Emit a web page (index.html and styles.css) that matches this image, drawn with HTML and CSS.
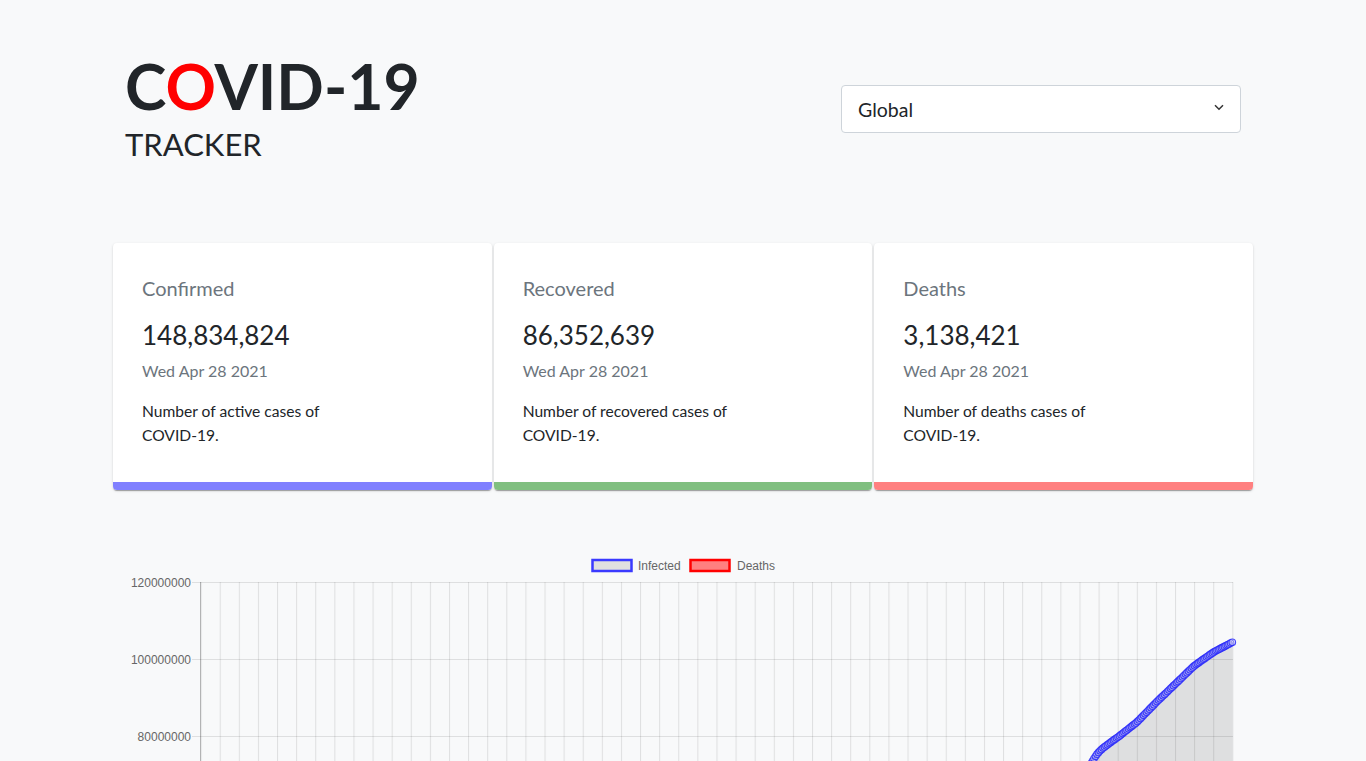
FILE: index.html
```html
<!DOCTYPE html>
<html lang="en">
<head>
<meta charset="utf-8">
<title>COVID-19 Tracker</title>
<link rel="stylesheet" href="styles.css">
</head>
<body>
<div class="container">
  <header class="header">
    <div class="brand">
      <h1 class="title">C<span class="red">O</span>VID-19</h1>
      <h2 class="subtitle">TRACKER</h2>
    </div>
    <div class="select">
      <span class="select-text">Global</span>
      <svg class="chevron" width="10" height="7" viewBox="0 0 10 7"><path d="M1 1.2l4 4 4-4" fill="none" stroke="#333" stroke-width="1.5"/></svg>
    </div>
  </header>

  <section class="cards">
    <div class="card">
      <div class="card-body">
        <p class="card-label">Confirmed</p>
        <p class="card-value">148,834,824</p>
        <p class="card-date">Wed Apr 28 2021</p>
        <p class="card-desc">Number of active cases of COVID-19.</p>
      </div>
      <div class="card-bar bar-blue"></div>
    </div>
    <div class="card">
      <div class="card-body">
        <p class="card-label">Recovered</p>
        <p class="card-value">86,352,639</p>
        <p class="card-date">Wed Apr 28 2021</p>
        <p class="card-desc">Number of recovered cases of COVID-19.</p>
      </div>
      <div class="card-bar bar-green"></div>
    </div>
    <div class="card">
      <div class="card-body">
        <p class="card-label">Deaths</p>
        <p class="card-value">3,138,421</p>
        <p class="card-date">Wed Apr 28 2021</p>
        <p class="card-desc">Number of deaths cases of COVID-19.</p>
      </div>
      <div class="card-bar bar-red"></div>
    </div>
  </section>

  <section class="chart">
    <svg class="chart-svg" width="1116" height="540" viewBox="0 0 1116 540">
      <defs>
        <pattern id="vgrid" patternUnits="userSpaceOnUse" x="75.6" y="0" width="19.106" height="540">
          <rect x="0" y="0" width="1" height="540" fill="rgba(0,0,0,0.1)"/>
        </pattern>
        <marker id="pt" markerUnits="userSpaceOnUse" markerWidth="10" markerHeight="10" refX="5" refY="5">
          <circle cx="5" cy="5" r="3.3" fill="rgba(220,220,240,0.35)" stroke="rgba(40,40,250,0.85)" stroke-width="1.1"/>
        </marker>
      </defs>

      <!-- legend -->
      <rect x="467.5" y="11" width="39" height="11" fill="#e0e0e0" stroke="#3a3aff" stroke-width="2.5"/>
      <text class="legend-text" x="513" y="20.5">Infected</text>
      <rect x="565.5" y="11" width="39" height="11" fill="#ff8080" stroke="#ff0000" stroke-width="2.5"/>
      <text class="legend-text" x="612" y="20.5">Deaths</text>

      <!-- vertical grid -->
      <rect x="75" y="33" width="1034" height="462" fill="url(#vgrid)"/>

      <!-- horizontal grid -->
      <g stroke="rgba(0,0,0,0.1)" stroke-width="1">
        <line x1="67" y1="33.5" x2="1108" y2="33.5"/>
        <line x1="67" y1="110.5" x2="1108" y2="110.5"/>
        <line x1="67" y1="187.5" x2="1108" y2="187.5"/>
        <line x1="67" y1="264.5" x2="1108" y2="264.5"/>
        <line x1="67" y1="341.5" x2="1108" y2="341.5"/>
        <line x1="67" y1="418.5" x2="1108" y2="418.5"/>
      </g>
      <line x1="75.5" y1="33" x2="75.5" y2="505" stroke="rgba(0,0,0,0.25)" stroke-width="1"/>
      <line x1="67" y1="495.5" x2="1108" y2="495.5" stroke="rgba(0,0,0,0.25)" stroke-width="1"/>

      <!-- y labels -->
      <g class="tick-text" text-anchor="end">
        <text x="66" y="37.5">120000000</text>
        <text x="66" y="114.5">100000000</text>
        <text x="66" y="191.5">80000000</text>
        <text x="66" y="268.5">60000000</text>
        <text x="66" y="345.5">40000000</text>
        <text x="66" y="422.5">20000000</text>
        <text x="66" y="499.5">0</text>
      </g>

      <!-- area -->
      <polygon fill="rgba(0,0,0,0.1)" points="75,495 400,494 700,480 850,420 920,300 960,225 963,219.8 966,214.5 969,209.6 972,205.2 975,201.8 978,199.1 981,196.8 984,194.6 987,192.3 990,190.2 993,188.1 996,185.7 999,183.3 1002,181 1005,178.6 1008,176.2 1011,173.9 1014,171 1017,167.9 1020,164.8 1023,161.8 1026,158.7 1029,155.7 1032,152.6 1035,149.7 1038,146.8 1041,144 1044,141.1 1047,138.2 1050,135.3 1053,132.4 1056,129.5 1059,126.6 1062,123.7 1065,120.8 1068,117.9 1071,115.5 1074,113.4 1077,111.2 1080,109.2 1083,107 1086,104.9 1089,102.9 1092,101.3 1095,99.7 1098,98.2 1101,96.6 1104,95 1107.3,93.3 1107.3,495"/>
      <!-- line -->
      <polyline fill="none" stroke="rgba(40,40,245,0.85)" stroke-width="3" stroke-linejoin="round" points="940,262 945,252 950,243 955,234 960,225 963,219.8 966,214.5 969,209.6 972,205.2 975,201.8 978,199.1 981,196.8 984,194.6 987,192.3 990,190.2 993,188.1 996,185.7 999,183.3 1002,181 1005,178.6 1008,176.2 1011,173.9 1014,171 1017,167.9 1020,164.8 1023,161.8 1026,158.7 1029,155.7 1032,152.6 1035,149.7 1038,146.8 1041,144 1044,141.1 1047,138.2 1050,135.3 1053,132.4 1056,129.5 1059,126.6 1062,123.7 1065,120.8 1068,117.9 1071,115.5 1074,113.4 1077,111.2 1080,109.2 1083,107 1086,104.9 1089,102.9 1092,101.3 1095,99.7 1098,98.2 1101,96.6 1104,95 1107.3,93.3"/>
      <!-- points -->
      <polyline fill="none" stroke="none" marker-start="url(#pt)" marker-mid="url(#pt)" marker-end="url(#pt)" points="940,262 942.5,257 945,252 947.5,247.5 950,243 952.5,238.5 955,234 957.5,229.5 960,225 961.5,222.4 963,219.8 964.5,217.1 966,214.5 967.5,212 969,209.6 970.5,207.3 972,205.2 973.5,203.4 975,201.8 976.5,200.4 978,199.1 979.5,197.9 981,196.8 982.5,195.7 984,194.6 985.5,193.4 987,192.3 988.5,191.2 990,190.2 991.5,189.1 993,188.1 994.5,186.9 996,185.7 997.5,184.5 999,183.3 1000.5,182.1 1002,181 1003.5,179.8 1005,178.6 1006.5,177.4 1008,176.2 1009.5,175 1011,173.9 1012.5,172.4 1014,171 1015.5,169.4 1017,167.9 1018.5,166.3 1020,164.8 1021.5,163.3 1023,161.8 1024.5,160.2 1026,158.7 1027.5,157.2 1029,155.7 1030.5,154.1 1032,152.6 1033.5,151.1 1035,149.7 1036.5,148.2 1038,146.8 1039.5,145.4 1041,144 1042.5,142.5 1044,141.1 1045.5,139.6 1047,138.2 1048.5,136.7 1050,135.3 1051.5,133.8 1053,132.4 1054.5,130.9 1056,129.5 1057.5,128 1059,126.6 1060.5,125.1 1062,123.7 1063.5,122.2 1065,120.8 1066.5,119.3 1068,117.9 1069.5,116.7 1071,115.5 1072.5,114.4 1074,113.4 1075.5,112.3 1077,111.2 1078.5,110.2 1080,109.2 1081.5,108.1 1083,107 1084.5,105.9 1086,104.9 1087.5,103.9 1089,102.9 1090.5,102.1 1092,101.3 1093.5,100.5 1095,99.7 1096.5,98.9 1098,98.2 1099.5,97.4 1101,96.6 1102.5,95.8 1104,95 1105.6,94.1 1107.3,93.3"/>
    </svg>
  </section>
</div>
</body>
</html>
```

FILE: styles.css
```css
* { box-sizing: border-box; }

body {
  margin: 0;
  background: #f8f9fa;
  font-family: Lato, "Open Sans", "Liberation Sans", sans-serif;
  color: #212529;
}

.container {
  width: 1140px;
  margin: 0 auto;
  padding: 0 12px;
}

.header {
  display: flex;
  justify-content: space-between;
  align-items: flex-start;
  padding-top: 48px;
}

.title {
  margin: 0;
  font-size: 62.5px;
  font-weight: 700;
  line-height: 1.2;
  color: #212529;
}

.red { color: #ff0000; }

.subtitle {
  margin: 3px 0 0;
  font-size: 31px;
  font-weight: 400;
  line-height: 1.2;
  color: #212529;
}

.select {
  width: 400px;
  height: 48px;
  margin-top: 37px;
  background: #fff;
  border: 1px solid #ced4da;
  border-radius: 4px;
  display: flex;
  align-items: center;
  justify-content: space-between;
  padding: 0 16px 0 16px;
}

.select-text {
  font-size: 19.5px;
  color: #212529;
}

.chevron { display: block; margin-top: -4px; }

.cards {
  margin: 80px -12px 0;
  display: grid;
  grid-template-columns: repeat(3, 1fr);
  gap: 2px;
}

.card {
  background: #fff;
  border-radius: 4px;
  overflow: hidden;
  display: flex;
  flex-direction: column;
  box-shadow: 0 2px 1px -1px rgba(0,0,0,0.2), 0 1px 1px 0 rgba(0,0,0,0.14), 0 1px 3px 0 rgba(0,0,0,0.12);
}

.card-body {
  padding: 33px 28px 35px 29px;
}

.card-body p { margin: 0; }

.card-label {
  font-size: 20px;
  line-height: 24px;
  color: #6c757d;
}

.card-value {
  margin-top: 19px !important;
  font-size: 26px;
  line-height: 32px;
  color: #212529;
}

.card-date {
  margin-top: 8px !important;
  font-size: 16px;
  line-height: 24px;
  color: #6c757d;
}

.card-desc {
  margin-top: 16px !important;
  font-size: 15.6px;
  line-height: 24px;
  max-width: 230px;
  color: #212529;
}

.card-bar { height: 8px; }
.bar-blue { background: #8080ff; }
.bar-green { background: #80bf80; }
.bar-red { background: #ff8080; }

.chart {
  margin-top: 59px;
}

.chart-svg { display: block; }

.legend-text, .tick-text {
  font-family: "Liberation Sans", Arial, sans-serif;
  font-size: 12px;
  fill: #666;
}
```
